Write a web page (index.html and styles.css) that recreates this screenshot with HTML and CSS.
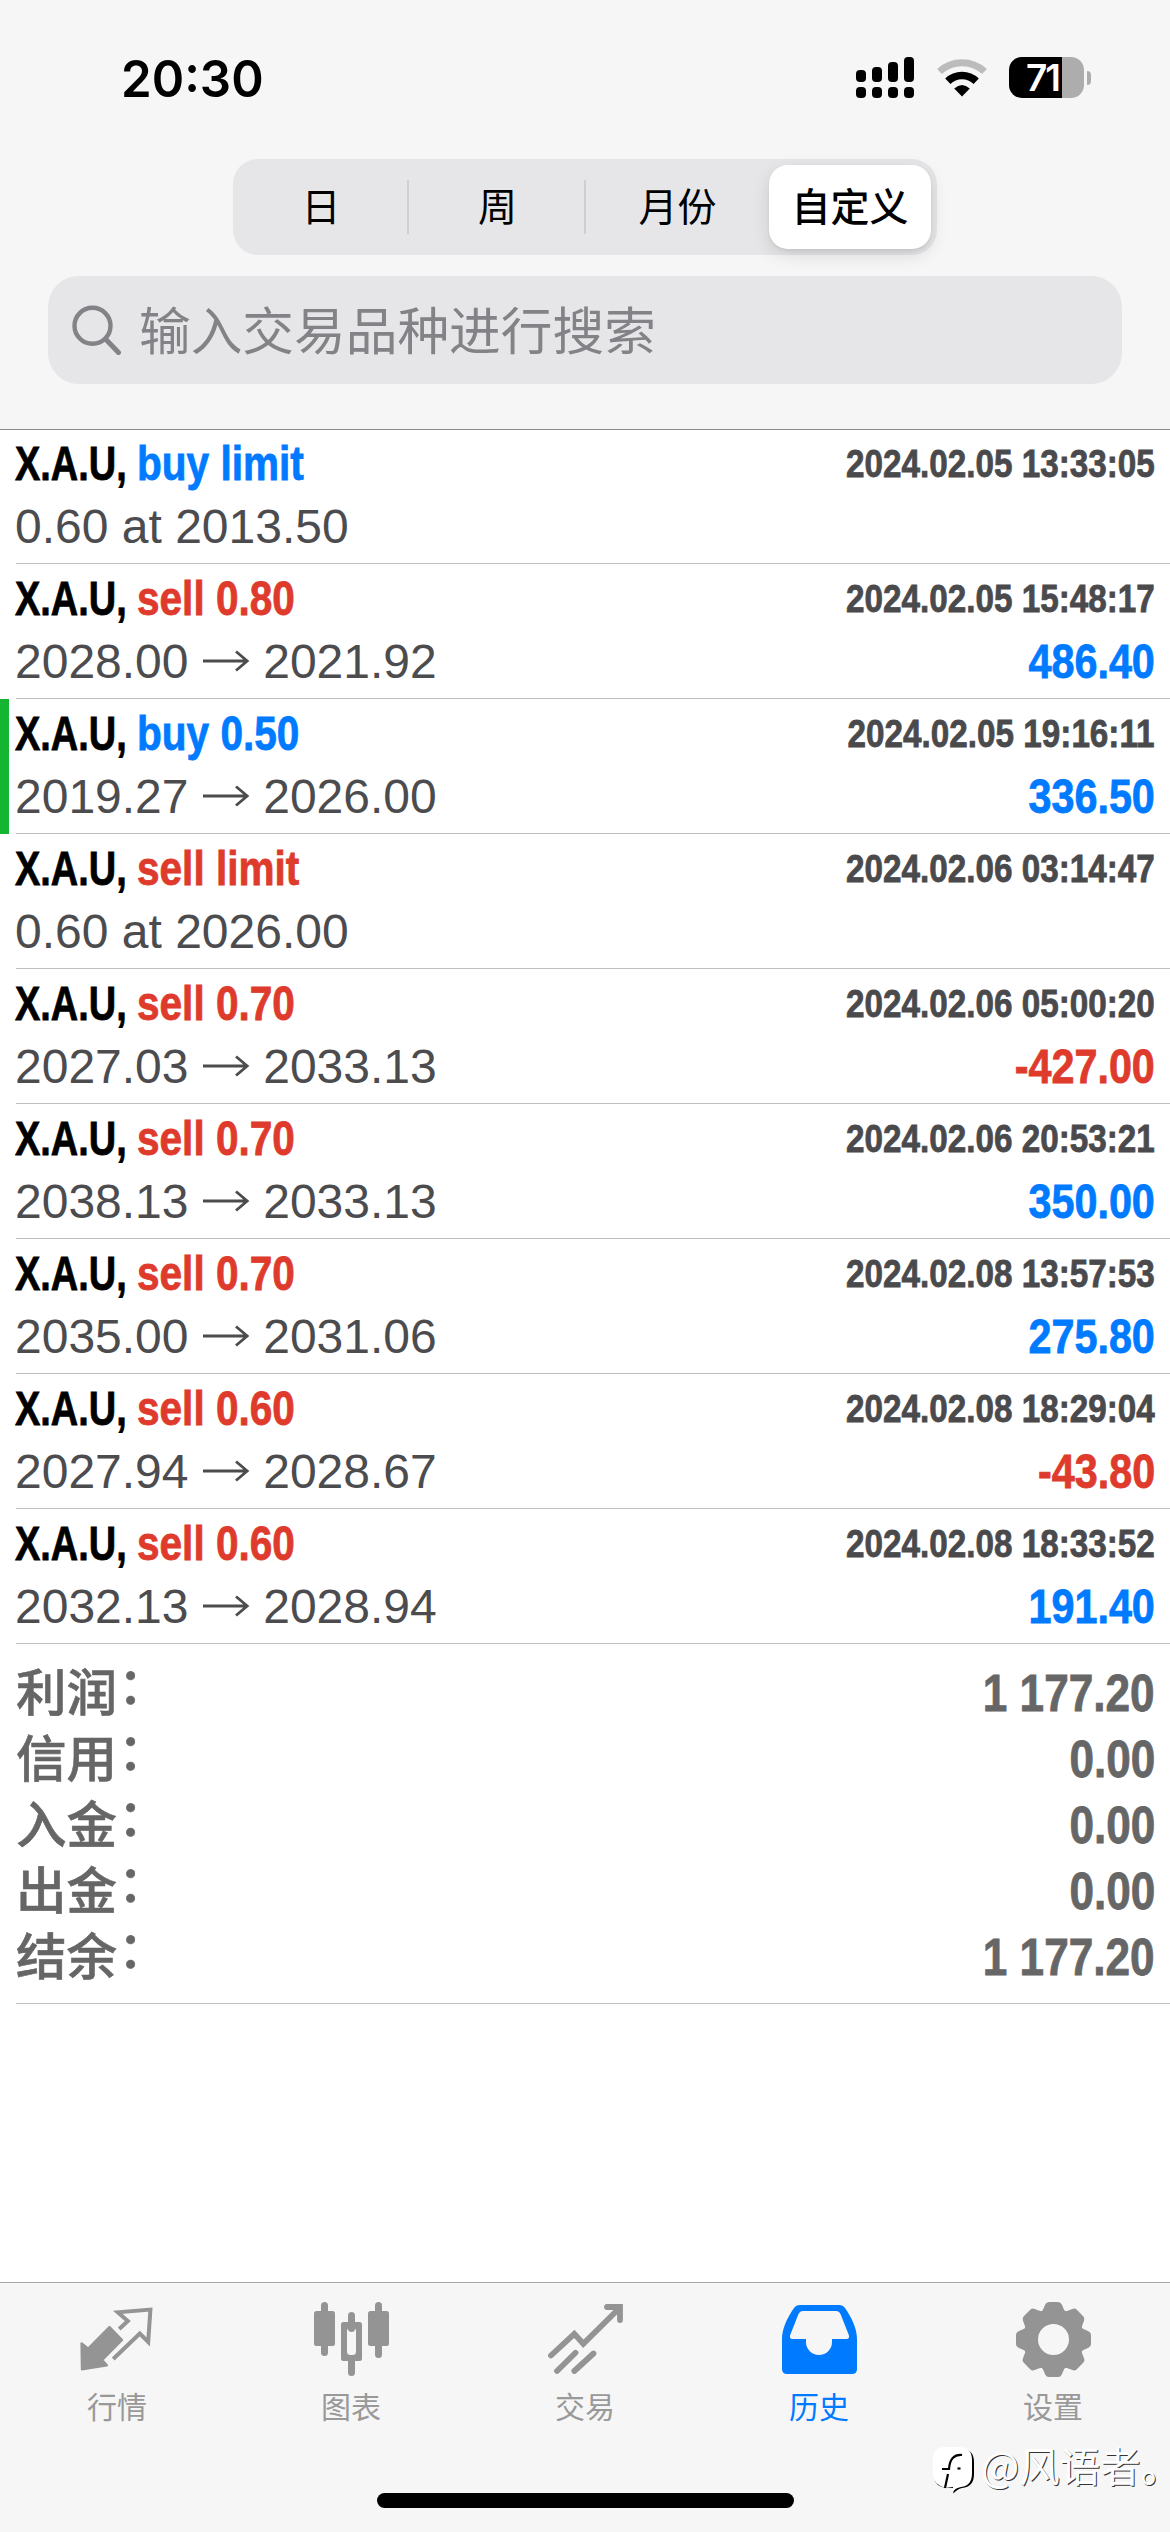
FILE: index.html
```html
<!DOCTYPE html>
<html lang="zh-CN">
<head>
<meta charset="utf-8">
<title>历史</title>
<link rel="stylesheet" href="styles.css">
</head>
<body>
<div class="screen">
  <header class="header">
    <div class="status">
      <div class="clock">20:30</div>
      <div class="status-icons">
        <svg class="signal" width="58" height="41" viewBox="0 0 58 41">
          <rect x="0" y="13" width="10" height="12" rx="4"/><rect x="16" y="10" width="10" height="15" rx="4"/><rect x="32" y="5" width="10" height="20" rx="4"/><rect x="48" y="0" width="10" height="25" rx="4"/>
          <rect x="0" y="30" width="10" height="11" rx="4"/><rect x="16" y="30" width="10" height="11" rx="4"/><rect x="32" y="30" width="10" height="11" rx="4"/><rect x="48" y="30" width="10" height="11" rx="4"/>
        </svg>
        <svg class="wifi" width="50" height="38" viewBox="0 0 50 38" fill="none">
          <path d="M2.500 12.500A33 33 0 0 1 47.500 12.500" stroke="#bcbcbc" stroke-width="7"/>
          <path d="M10.800 22.200A20.500 20.500 0 0 1 39.200 22.200" stroke="#000" stroke-width="7.500"/>
          <path d="M25 37.500L17.200 29.600Q25 22.600 32.800 29.600Z" fill="#000"/>
        </svg>
        <div class="battery"><div class="cell"><span class="percent">71</span></div><i class="nub"></i></div>
      </div>
    </div>
    <div class="segments">
      <div class="segment">日</div><div class="segment">周</div><div class="segment">月份</div><div class="segment selected">自定义</div>
    </div>
    <div class="search">
      <svg width="50" height="50" viewBox="0 0 50 50" fill="none" stroke="#828287" stroke-width="4.400" stroke-linecap="round"><circle cx="20.500" cy="20.800" r="18"/><path d="M33.500 34L46.500 47.500" stroke-width="5"/></svg>
      <span>输入交易品种进行搜索</span>
    </div>
  </header>

  <main class="list">
    <div class="deal"><div class="line"><span class="symbol">X.A.U,</span><span class="kind buy">buy limit</span><span class="time">2024.02.05 13:33:05</span></div><div class="line"><span class="prices">0.60 at 2013.50</span></div></div>
    <div class="deal"><div class="line"><span class="symbol">X.A.U,</span><span class="kind sell">sell 0.80</span><span class="time">2024.02.05 15:48:17</span></div><div class="line"><span class="prices">2028.00 <svg class="arrow" viewBox="0 0 48 24"><path d="M1 12H45M34 2.5L45.2 12L34 21.5"/></svg> 2021.92</span><span class="value gain">486.40</span></div></div>
    <div class="deal marked"><div class="line"><span class="symbol">X.A.U,</span><span class="kind buy">buy 0.50</span><span class="time">2024.02.05 19:16:11</span></div><div class="line"><span class="prices">2019.27 <svg class="arrow" viewBox="0 0 48 24"><path d="M1 12H45M34 2.5L45.2 12L34 21.5"/></svg> 2026.00</span><span class="value gain">336.50</span></div></div>
    <div class="deal"><div class="line"><span class="symbol">X.A.U,</span><span class="kind sell">sell limit</span><span class="time">2024.02.06 03:14:47</span></div><div class="line"><span class="prices">0.60 at 2026.00</span></div></div>
    <div class="deal"><div class="line"><span class="symbol">X.A.U,</span><span class="kind sell">sell 0.70</span><span class="time">2024.02.06 05:00:20</span></div><div class="line"><span class="prices">2027.03 <svg class="arrow" viewBox="0 0 48 24"><path d="M1 12H45M34 2.5L45.2 12L34 21.5"/></svg> 2033.13</span><span class="value loss">-427.00</span></div></div>
    <div class="deal"><div class="line"><span class="symbol">X.A.U,</span><span class="kind sell">sell 0.70</span><span class="time">2024.02.06 20:53:21</span></div><div class="line"><span class="prices">2038.13 <svg class="arrow" viewBox="0 0 48 24"><path d="M1 12H45M34 2.5L45.2 12L34 21.5"/></svg> 2033.13</span><span class="value gain">350.00</span></div></div>
    <div class="deal"><div class="line"><span class="symbol">X.A.U,</span><span class="kind sell">sell 0.70</span><span class="time">2024.02.08 13:57:53</span></div><div class="line"><span class="prices">2035.00 <svg class="arrow" viewBox="0 0 48 24"><path d="M1 12H45M34 2.5L45.2 12L34 21.5"/></svg> 2031.06</span><span class="value gain">275.80</span></div></div>
    <div class="deal"><div class="line"><span class="symbol">X.A.U,</span><span class="kind sell">sell 0.60</span><span class="time">2024.02.08 18:29:04</span></div><div class="line"><span class="prices">2027.94 <svg class="arrow" viewBox="0 0 48 24"><path d="M1 12H45M34 2.5L45.2 12L34 21.5"/></svg> 2028.67</span><span class="value loss">-43.80</span></div></div>
    <div class="deal"><div class="line"><span class="symbol">X.A.U,</span><span class="kind sell">sell 0.60</span><span class="time">2024.02.08 18:33:52</span></div><div class="line"><span class="prices">2032.13 <svg class="arrow" viewBox="0 0 48 24"><path d="M1 12H45M34 2.5L45.2 12L34 21.5"/></svg> 2028.94</span><span class="value gain">191.40</span></div></div>

    <div class="summary">
      <div class="total"><span class="label">利润<b class="colon">：</b></span><span class="amount">1 177.20</span></div>
      <div class="total"><span class="label">信用<b class="colon">：</b></span><span class="amount">0.00</span></div>
      <div class="total"><span class="label">入金<b class="colon">：</b></span><span class="amount">0.00</span></div>
      <div class="total"><span class="label">出金<b class="colon">：</b></span><span class="amount">0.00</span></div>
      <div class="total"><span class="label">结余<b class="colon">：</b></span><span class="amount">1 177.20</span></div>
    </div>
  </main>

  <nav class="tabs">
    <div class="tab">
      <svg viewBox="0 0 75 75"><path d="M29.5 25.2L42 38L22.2 58L26.8 63.4L2 67.2L1.6 41.5L8.2 46.6Z" fill="#949494" stroke="#949494" stroke-width="2.4" stroke-linejoin="round"/><path d="M39.2 27L47.8 19L37.8 10.3L70.4 7.6L68.2 40L59.8 31.5L33.2 57" fill="none" stroke="#949494" stroke-width="4"/></svg>
      <span>行情</span>
    </div>
    <div class="tab">
      <svg viewBox="0 0 75 75" fill="#949494"><rect x="7" y="0" width="7" height="54" rx="3.5"/><rect x="0" y="9" width="21" height="35" rx="2.5"/><rect x="61" y="0" width="7" height="56" rx="3.5"/><rect x="54" y="9" width="21" height="35" rx="2.5"/><rect x="34" y="10" width="7" height="20" rx="3.5"/><rect x="34" y="54" width="7" height="20" rx="3.5"/><path fill-rule="evenodd" d="M29.500 20H45.500Q48 20 48 22.500V56.500Q48 59 45.500 59H29.500Q27 59 27 56.500V22.500Q27 20 29.500 20ZM36.500 25.700Q33 25.700 33 29.200V49.500Q33 53 36.500 53H38.500Q42 53 42 49.500V29.200Q42 25.700 38.500 25.700Z"/></svg>
      <span>图表</span>
    </div>
    <div class="tab">
      <svg viewBox="0 0 75 75" fill="none" stroke="#949494" stroke-width="5.800" stroke-linecap="round"><path d="M3 53.500L26.300 31.800L35.300 41.700L71 6.500"/><path d="M59 5H72V18"/><path d="M9 69L27.500 50.800M26.300 69L45.500 51.500"/></svg>
      <span>交易</span>
    </div>
    <div class="tab active">
      <svg viewBox="0 0 75 75" fill="#007aff"><path fill-rule="evenodd" d="M18 3H57Q61 3 63 6C70 16 75 27 75 37V67Q75 72 70 72H5Q0 72 0 67V37C0 27 5 16 12 6Q14 3 18 3ZM21 9Q18 9 16.500 12L8.200 33Q7 37 10.500 37H24V40A13 13 0 0 0 50 40V37H64.500Q68 37 66.800 33L58.500 12Q57 9 54 9Z"/></svg>
      <span>历史</span>
    </div>
    <div class="tab">
      <svg viewBox="-37.5 -37.5 75 75" fill="#949494"><defs><path id="tooth" d="M-13 -25V-27.500Q-11 -28 -10 -31L-8.300 -35Q-7.300 -37.500 -4.500 -37.500H4.500Q7.300 -37.500 8.300 -35L10 -31Q11 -28 13 -27.500V-25Z"/></defs><circle r="23" fill="none" stroke="#949494" stroke-width="15"/><use href="#tooth"/><use href="#tooth" transform="rotate(45)"/><use href="#tooth" transform="rotate(90)"/><use href="#tooth" transform="rotate(135)"/><use href="#tooth" transform="rotate(180)"/><use href="#tooth" transform="rotate(225)"/><use href="#tooth" transform="rotate(270)"/><use href="#tooth" transform="rotate(315)"/></svg>
      <span>设置</span>
    </div>
    <div class="home-indicator"></div>
    <div class="watermark">
      <svg width="43" height="48" viewBox="0 0 43 48"><path d="M13 2H28Q41 2 41 15V27Q41 40 29 41Q24 42 20.500 46.500L20 41L14 41Q1 40 1 28V14Q1 2 13 2Z" fill="#000"/><path d="M12 0H26Q39 0 39 13V26Q39 39 28 40Q22 41 20 45L20 40L12 41Q0 37 0 27V12Q0 0 12 0Z" fill="#fff"/><path d="M29 8Q17 7 16 22H9M15 27L12 41" fill="none" stroke="#000" stroke-width="2.200"/><path d="M24.500 21.500H27.500" stroke="#000" stroke-width="2.200"/></svg>
      <span>@风语者。</span>
    </div>
  </nav>
</div>
</body>
</html>
```
FILE: styles.css
```css
* { box-sizing: border-box; }
body {
  margin: 0;
  background: #fff;
  font-family: "Liberation Sans", "Noto Sans CJK SC", sans-serif;
}
.screen {
  width: 1170px;
  height: 2532px;
  display: flex;
  flex-direction: column;
  overflow: hidden;
}

/* Header */
.header {
  height: 430px;
  background: #f6f6f6;
  border-bottom: 1px solid #8c8c8e;
  display: flex;
  flex-direction: column;
  align-items: center;
}
.status {
  align-self: stretch;
  height: 159px;
  padding: 0 79px 0 121px;
  display: flex;
  justify-content: space-between;
}
.clock {
  font: 600 51px/61px Inter, sans-serif;
  padding-top: 48px;
  transform: scaleX(.965);
  transform-origin: 0 50%;
}
.status-icons { display: flex; padding-top: 57px; }
.signal { margin-right: 23px; }
.wifi { margin: 2px 22px 0 0; }
.battery { display: flex; align-items: center; gap: 3px; height: 41px; }
.cell {
  width: 75px;
  height: 41px;
  padding-left: 17px;
  border-radius: 13px;
  background: linear-gradient(90deg, #000 53px, #adadad 53px);
  color: #fff;
}
.percent { font: 600 37px/41px Inter, sans-serif; letter-spacing: -2px; }
.nub { width: 4px; height: 14px; border-radius: 0 5px 5px 0; background: #adadad; }

.segments {
  width: 704px;
  height: 96px;
  padding: 6px 6px 6px 0;
  border-radius: 25px;
  background: #e6e6e8;
  display: grid;
  grid-template-columns: 176px 177px 183px 162px;
  font: 400 39px/79px "Noto Sans CJK SC", sans-serif;
  text-align: center;
}
.segment:nth-child(-n+2) {
  background: linear-gradient(#cfcfd2, #cfcfd2) right 15px / 2px 54px no-repeat;
}
.segment.selected {
  border-radius: 19px;
  background: #fff;
  font-weight: 500;
  box-shadow: 0 6px 18px rgba(0, 0, 0, .12), 0 2px 3px rgba(0, 0, 0, .06);
}
.search {
  width: 1074px;
  height: 108px;
  margin-top: 21px;
  padding-left: 24px;
  border-radius: 31px;
  background: #e6e6e8;
  display: flex;
  align-items: center;
  gap: 17px;
  color: #828287;
  font: 400 51.700px/104px "Noto Sans CJK SC", sans-serif;
}
.search span { height: 108px; }

/* Deals */
.deal {
  height: 135px;
  padding: 3px 16px 0 15px;
  background: linear-gradient(#bebec0, #bebec0) 16px 100% / 100% 1px no-repeat;
}
.deal:first-child { height: 134px; padding-top: 2px; }
.deal.marked { border-left: 9px solid #14b531; padding-left: 6px; background-position-x: 7px; }
.line {
  height: 63px;
  display: flex;
  align-items: center;
  font-size: 48px;
  line-height: 63px;
  white-space: nowrap;
}
.symbol, .kind, .time, .value, .amount {
  font-weight: 700;
  -webkit-text-stroke: .8px currentColor;
}
.symbol {
  width: 122px;
  color: #000;
  transform: scaleX(.79);
  transform-origin: 0 50%;
}
.kind { transform: scaleX(.845); transform-origin: 0 50%; }
.buy, .gain { color: #007aff; }
.sell, .loss { color: #de3b2d; }
.time {
  margin-left: auto;
  color: #4a4a4d;
  font-size: 39.500px;
  line-height: 61px;
  transform: translateX(1px) scaleX(.842);
  transform-origin: 100% 50%;
}
.prices { color: #4c4c4f; }
.arrow {
  width: 48px;
  height: 24px;
  vertical-align: 5px;
  fill: none;
  stroke: #4c4c4f;
  stroke-width: 2.800;
}
.value { margin-left: auto; transform: translateX(1px) scaleX(.86); transform-origin: 100% 50%; }

/* Totals */
.summary {
  height: 360px;
  padding: 17px 15px 0 16px;
  background: linear-gradient(#bebec0, #bebec0) 16px 100% / 100% 1px no-repeat;
}
.total {
  height: 66px;
  display: flex;
  justify-content: space-between;
  color: #666;
  line-height: 66px;
}
.label {
  font: 500 50.500px/57px "Noto Sans CJK SC", sans-serif;
  -webkit-text-stroke: .6px currentColor;
}
.colon { display: inline-block; font-weight: 500; transform: translate(1px, -7px); }
.amount { font-size: 51px; transform: scaleX(.865); transform-origin: 100% 50%; }

/* Tab bar */
.tabs {
  position: relative;
  height: 250px;
  margin-top: auto;
  padding-top: 19px;
  border-top: 1px solid #a8a8aa;
  background: #f6f6f6;
  display: grid;
  grid-template-columns: repeat(5, 1fr);
}
.tab {
  display: flex;
  flex-direction: column;
  align-items: center;
  color: #999;
  font: 400 30px/44px "Noto Sans CJK SC", sans-serif;
}
.tab svg { width: 75px; height: 75px; margin-bottom: 6px; }
.tab.active { color: #007aff; }
.home-indicator {
  position: absolute;
  left: 377px;
  bottom: 24px;
  width: 417px;
  height: 15px;
  border-radius: 8px;
  background: #000;
}
.watermark {
  position: absolute;
  left: 933px;
  top: 164px;
  display: flex;
  gap: 5px;
  color: #fff;
  font: 400 40.500px/36px "Noto Sans CJK SC", sans-serif;
  text-shadow: 1px 1px 0 #333;
  white-space: nowrap;
}
```
